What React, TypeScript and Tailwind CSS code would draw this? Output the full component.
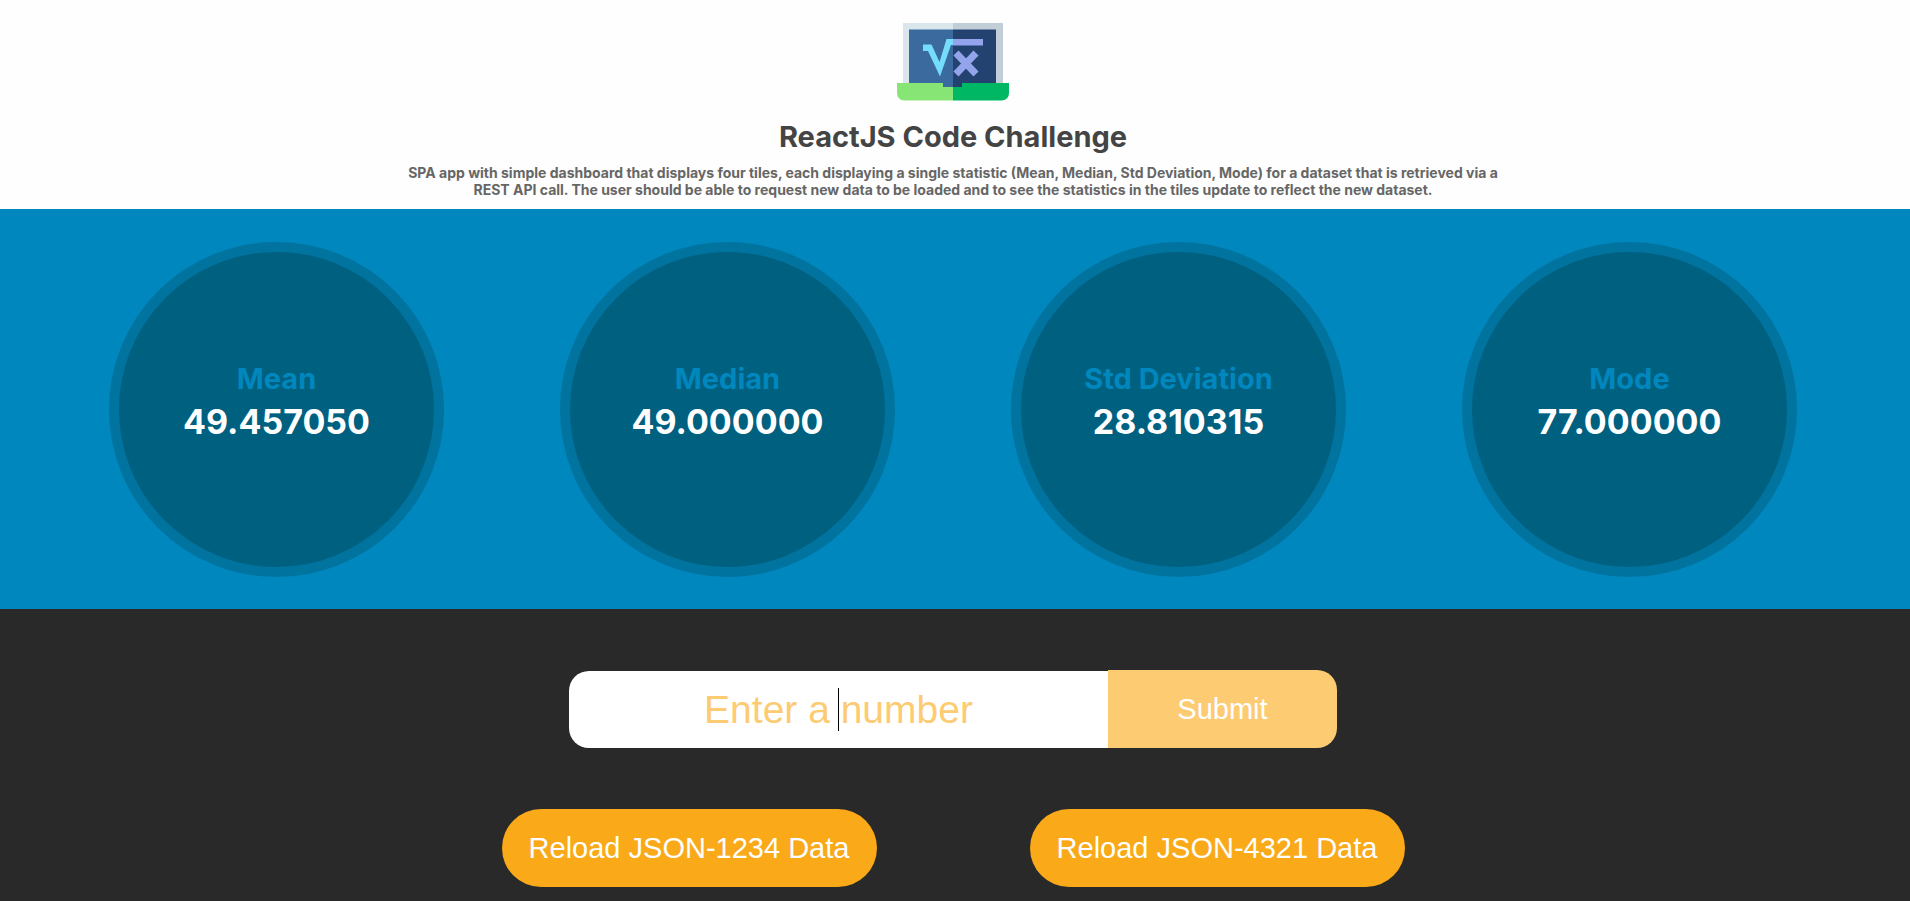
import { useState } from "react";

type Stat = { label: string; value: number };

const stats: Stat[] = [
  { label: "Mean", value: 49.45705 },
  { label: "Median", value: 49 },
  { label: "Std Deviation", value: 28.810315 },
  { label: "Mode", value: 77 },
];

function Logo() {
  return (
    <svg width="112" height="78" viewBox="0 0 112 78" aria-hidden="true">
      <path d="M6 0H56V62H6Z" fill="#d9e7ec" />
      <path d="M56 0H106V62H56Z" fill="#c1ced7" />
      <path d="M12 6.500H56V64H12Z" fill="#3b6a9f" />
      <path d="M56 6.500H99V64H56Z" fill="#24426f" />
      <path d="M0 60H46V64H56V77.500H7Q0 76.500 0 70Z" fill="#87e575" />
      <path d="M112 60H65V64H56V77.500H105Q112 76.500 112 70Z" fill="#00b864" />
      <path d="M26 21.500H34.500L42.500 39L49.500 16H56V22H54L43 53.500L31 28H26Z" fill="#75dcfb" />
      <path d="M56 16H86V22.500H56Z" fill="#94a4ec" />
      <path d="M59 30L79 51M79 30L59 51" stroke="#94a4ec" strokeWidth="7" />
    </svg>
  );
}

function StatTile({ label, value }: Stat) {
  return (
    <article className="flex size-[335px] flex-col items-center justify-center rounded-full border-10 border-[#00739f] bg-[#006080] pb-3.5 font-bold">
      <h2 className="text-[29px] leading-[38px] text-[#0087be]">{label}</h2>
      <p className="text-[34px] leading-[48px] text-white">{value.toFixed(6)}</p>
    </article>
  );
}

function ReloadButton({ id }: { id: string }) {
  return (
    <button type="button" className="h-[78px] w-[375px] rounded-full bg-[#faa919] pt-0.5 text-[29px] text-white">
      Reload JSON-{id} Data
    </button>
  );
}

export default function App() {
  const [number, setNumber] = useState("");

  return (
    <main className="flex min-h-screen flex-col bg-[#292929] font-['Inter',sans-serif]">
      <header className="flex flex-col items-center bg-[#fefefe] pt-[23px] pr-5 pb-[11px] pl-4 text-center">
        <Logo />
        <h1 className="mt-4 text-[29px] leading-10 font-bold text-[#444444]">ReactJS Code Challenge</h1>
        <p className="mt-[7px] max-w-[1120px] text-sm leading-[17px] font-bold text-[#666666]">
          SPA app with simple dashboard that displays four tiles, each displaying a single statistic (Mean, Median, Std
          Deviation, Mode) for a dataset that is retrieved via a REST API call. The user should be able to request new
          data to be loaded and to see the statistics in the tiles update to reflect the new dataset.
        </p>
      </header>

      <section
        className="grid grid-cols-4 justify-items-center bg-[#0087be] pt-[33px] pr-[55px] pb-8 pl-[51px]"
        aria-label="Statistics"
      >
        {stats.map((stat) => (
          <StatTile key={stat.label} {...stat} />
        ))}
      </section>

      <section className="flex flex-col items-center pt-[61px] pr-1 pb-3 font-['Liberation_Sans',Arial,sans-serif]">
        <form className="flex items-end" onSubmit={(event) => event.preventDefault()}>
          <div className="relative">
            <input
              type="text"
              aria-label="Enter a number"
              placeholder="Enter a number"
              value={number}
              onChange={(event) => setNumber(event.target.value)}
              className="block h-[77px] w-[539px] rounded-l-[20px] bg-white text-center text-[39px] text-black outline-none placeholder:text-[#fdcb72]"
            />
            <span className="absolute top-[17px] left-[269px] h-[43px] w-px bg-black" aria-hidden="true" />
          </div>
          <button
            type="submit"
            className="h-[78px] w-[229px] rounded-r-[20px] bg-[#fdcb72] pt-0.5 text-[29px] text-white"
          >
            Submit
          </button>
        </form>
        <div className="mt-[61px] flex gap-[153px]">
          <ReloadButton id="1234" />
          <ReloadButton id="4321" />
        </div>
      </section>
    </main>
  );
}
